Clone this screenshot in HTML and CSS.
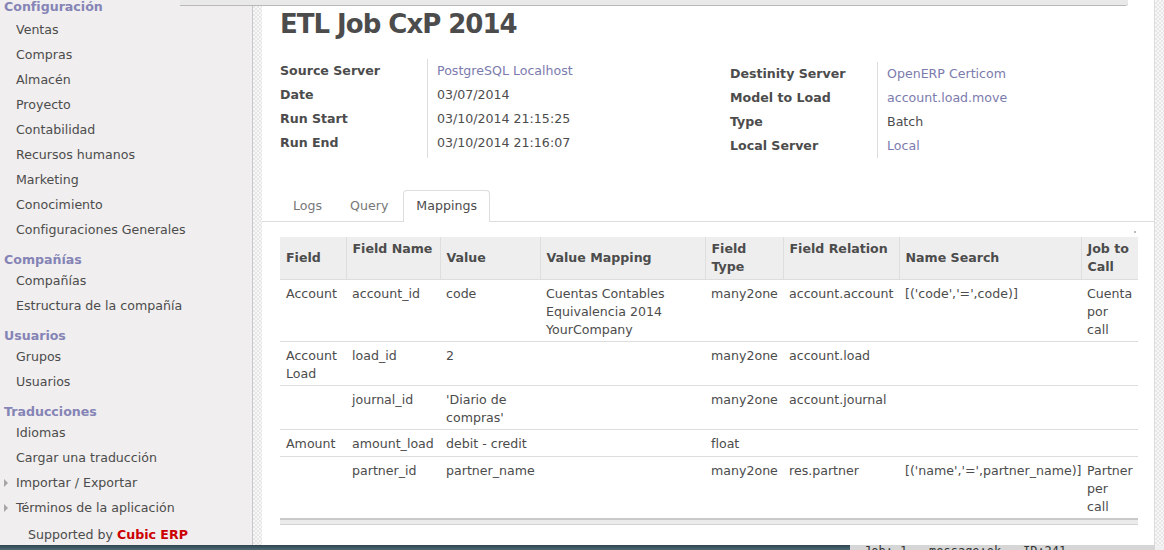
FILE: index.html
```html
<!DOCTYPE html>
<html lang="es">
<head>
<meta charset="utf-8">
<title>ETL Job CxP 2014</title>
<link rel="stylesheet" href="styles.css">
</head>
<body>
<div class="screen">
  <div class="window-top"></div>
  <div class="workspace">
    <aside class="sidebar">
      <div class="menu-head first">Configuración</div>
      <div class="menu-item"><span class="caret-box"></span>Ventas</div>
      <div class="menu-item"><span class="caret-box"></span>Compras</div>
      <div class="menu-item"><span class="caret-box"></span>Almacén</div>
      <div class="menu-item"><span class="caret-box"></span>Proyecto</div>
      <div class="menu-item"><span class="caret-box"></span>Contabilidad</div>
      <div class="menu-item"><span class="caret-box"></span>Recursos humanos</div>
      <div class="menu-item"><span class="caret-box"></span>Marketing</div>
      <div class="menu-item"><span class="caret-box"></span>Conocimiento</div>
      <div class="menu-item"><span class="caret-box"></span>Configuraciones Generales</div>
      <div class="menu-head spaced">Compañías</div>
      <div class="menu-item"><span class="caret-box"></span>Compañías</div>
      <div class="menu-item"><span class="caret-box"></span>Estructura de la compañía</div>
      <div class="menu-head spaced">Usuarios</div>
      <div class="menu-item"><span class="caret-box"></span>Grupos</div>
      <div class="menu-item"><span class="caret-box"></span>Usuarios</div>
      <div class="menu-head spaced">Traducciones</div>
      <div class="menu-item"><span class="caret-box"></span>Idiomas</div>
      <div class="menu-item"><span class="caret-box"></span>Cargar una traducción</div>
      <div class="menu-item"><span class="caret-box"><span class="caret"></span></span>Importar / Exportar</div>
      <div class="menu-item"><span class="caret-box"><span class="caret"></span></span>Términos de la aplicación</div>
      <div class="supported">Supported by <span class="brand">Cubic ERP</span></div>
    </aside>
    <div class="gutter"></div>
    <main class="content">
      <h1 class="title">ETL Job CxP 2014</h1>
      <div class="info">
        <div class="group">
          <div class="labels">
            <div>Source Server</div>
            <div>Date</div>
            <div>Run Start</div>
            <div>Run End</div>
          </div>
          <div class="values">
            <div class="link">PostgreSQL Localhost</div>
            <div>03/07/2014</div>
            <div>03/10/2014 21:15:25</div>
            <div>03/10/2014 21:16:07</div>
          </div>
        </div>
        <div class="group right">
          <div class="labels">
            <div>Destinity Server</div>
            <div>Model to Load</div>
            <div>Type</div>
            <div>Local Server</div>
          </div>
          <div class="values">
            <div class="link">OpenERP Certicom</div>
            <div class="link">account.load.move</div>
            <div>Batch</div>
            <div class="link">Local</div>
          </div>
        </div>
      </div>
      <div class="tabs">
        <div class="tab">Logs</div>
        <div class="tab">Query</div>
        <div class="tab active">Mappings</div>
      </div>
      <div class="table-wrap">
        <span class="dot"></span>
        <table class="grid">
          <colgroup>
            <col class="c-field">
            <col class="c-name">
            <col class="c-value">
            <col class="c-map">
            <col class="c-type">
            <col class="c-rel">
            <col class="c-search">
            <col class="c-job">
          </colgroup>
          <thead>
            <tr>
              <th>Field</th>
              <th class="top">Field Name</th>
              <th>Value</th>
              <th>Value Mapping</th>
              <th>Field<br>Type</th>
              <th class="top">Field Relation</th>
              <th>Name Search</th>
              <th>Job to<br>Call</th>
            </tr>
          </thead>
          <tbody>
            <tr>
              <td>Account</td>
              <td>account_id</td>
              <td>code</td>
              <td>Cuentas Contables<br>Equivalencia 2014<br>YourCompany</td>
              <td>many2one</td>
              <td>account.account</td>
              <td>[('code','=',code)]</td>
              <td>Cuenta<br>por<br>call</td>
            </tr>
            <tr>
              <td>Account<br>Load</td>
              <td>load_id</td>
              <td>2</td>
              <td></td>
              <td>many2one</td>
              <td>account.load</td>
              <td></td>
              <td></td>
            </tr>
            <tr>
              <td></td>
              <td>journal_id</td>
              <td>'Diario de<br>compras'</td>
              <td></td>
              <td>many2one</td>
              <td>account.journal</td>
              <td></td>
              <td></td>
            </tr>
            <tr class="short">
              <td>Amount</td>
              <td>amount_load</td>
              <td>debit - credit</td>
              <td></td>
              <td>float</td>
              <td></td>
              <td></td>
              <td></td>
            </tr>
            <tr>
              <td></td>
              <td>partner_id</td>
              <td>partner_name</td>
              <td></td>
              <td>many2one</td>
              <td>res.partner</td>
              <td>[('name','=',partner_name)]</td>
              <td>Partner<br>per<br>call</td>
            </tr>
          </tbody>
          <tfoot>
            <tr><td colspan="8"></td></tr>
          </tfoot>
        </table>
      </div>
    </main>
    <div class="edge"></div>
  </div>
  <div class="desktop">
    <div class="desk-left"></div>
    <div class="terminal">Job: 1 &nbsp; message:ok &nbsp; ID:241</div>
    <div class="desk-right"></div>
  </div>
</div>
</body>
</html>
```
FILE: styles.css
```css
html, body {
  margin: 0;
  padding: 0;
}
body {
  width: 1164px;
  height: 550px;
  overflow: hidden;
  background: #ffffff;
  font-family: "DejaVu Sans", "Liberation Sans", sans-serif;
  font-size: 12.6px;
  color: #4c4c4c;
}
.screen {
  position: relative;
  width: 1164px;
  height: 550px;
  display: flex;
  flex-direction: column;
}
.window-top {
  position: absolute;
  left: 180px;
  top: 0;
  width: 948px;
  height: 5px;
  background: #e9e9e9;
  border-bottom: 1px solid #b9b9b9;
  border-bottom-right-radius: 3px;
  z-index: 2;
}
.workspace {
  display: flex;
  height: 545px;
}
.sidebar {
  flex: none;
  background: #f0eeee;
  border-right: 1px solid #c7c6cf;
  box-sizing: border-box;
  width: 253px;
  overflow: hidden;
}
.menu-head {
  padding-left: 4px;
  line-height: 16px;
  font-weight: bold;
  color: #8584b6;
}
.menu-head.first {
  margin-top: -3px;
  line-height: 20px;
}
.menu-head.spaced {
  margin-top: 10px;
}
.menu-item {
  display: flex;
  align-items: center;
  height: 25px;
  white-space: nowrap;
}
.caret-box {
  width: 16px;
  flex: none;
  display: flex;
  align-items: center;
}
.caret {
  margin-left: 4px;
  width: 0;
  height: 0;
  border-top: 4px solid transparent;
  border-bottom: 4px solid transparent;
  border-left: 4px solid #a6a6a6;
}
.supported {
  margin-top: 5px;
  padding-left: 28px;
  line-height: 20px;
}
.brand {
  color: #cc0000;
  font-weight: bold;
}
.gutter, .edge {
  flex: none;
  width: 9px;
  background-color: #f7f7f7;
  background-image: conic-gradient(#e7e7e7 25%, transparent 0 50%, #e7e7e7 0 75%, transparent 0);
  background-size: 4px 4px;
}
.edge {
  border-left: 1px solid #dcdcdc;
}
.content {
  flex: 1;
  min-width: 0;
  background: #ffffff;
  display: flex;
  flex-direction: column;
}
.title {
  margin: 6px 0 0 18px;
  font-size: 26px;
  letter-spacing: -1px;
  line-height: 36px;
  font-weight: bold;
  color: #4c4c4c;
}
.info {
  display: flex;
  margin: 17px 0 0 18px;
}
.group {
  display: flex;
  flex: none;
  width: 450px;
  line-height: 24px;
}
.group.right {
  margin-top: 3px;
}
.labels {
  width: 147px;
  font-weight: bold;
}
.values {
  border-left: 1px solid #dddddd;
  padding-left: 9px;
}
.link {
  color: #7c7bad;
}
.tabs {
  display: flex;
  margin-top: 32px;
  padding-left: 18px;
  border-bottom: 1px solid #dddddd;
}
.tab {
  padding: 0 12px;
  margin-right: 2px;
  line-height: 30px;
  border: 1px solid transparent;
  border-bottom: none;
  color: #777777;
}
.tab.active {
  color: #4c4c4c;
  border-color: #dddddd;
  border-radius: 4px 4px 0 0;
  background: #ffffff;
  margin-bottom: -1px;
  padding-bottom: 1px;
}
.table-wrap {
  position: relative;
  margin: 15px 17px 0 18px;
}
.dot {
  position: absolute;
  right: 1px;
  top: -6px;
  width: 2px;
  height: 2px;
  background: #bbbbbb;
}
.grid {
  width: 100%;
  border-collapse: collapse;
  table-layout: fixed;
}
.c-field { width: 66px; }
.c-name { width: 94px; }
.c-value { width: 100px; }
.c-map { width: 165px; }
.c-type { width: 78px; }
.c-rel { width: 116px; }
.c-search { width: 182px; }
.c-job { width: 57px; }
.grid th {
  background: #eeeeee;
  text-align: left;
  font-weight: bold;
  padding: 3px 4px 3px 6px;
  line-height: 18px;
  height: 36px;
  vertical-align: middle;
  border-left: 1px solid #dedede;
  border-bottom: 1px solid #dddddd;
}
.grid th:first-child {
  border-left: none;
}
.grid th.top {
  vertical-align: top;
}
.grid td {
  padding: 5px 4px 2px 6px;
  line-height: 18px;
  vertical-align: top;
  border-bottom: 1px solid #dddddd;
  white-space: nowrap;
}
.grid tr.short td {
  padding-bottom: 3px;
}
.grid tfoot td {
  padding: 0;
  height: 4px;
  background: #ebebeb;
  border-top: 2px solid #c9c9c9;
  border-bottom: 1px solid #d3d3d3;
}
.desktop {
  display: flex;
  height: 5px;
  overflow: hidden;
}
.desk-left {
  width: 850px;
  background: linear-gradient(to bottom, #2f4550, #4d6a74);
}
.terminal {
  width: 305px;
  background: #d6d6d6;
  font-family: "DejaVu Sans Mono", monospace;
  font-size: 12px;
  line-height: 12px;
  color: #333333;
  padding-left: 14px;
  box-sizing: border-box;
  white-space: nowrap;
}
.desk-right {
  flex: 1;
  background: #f0f0f0;
}
```
